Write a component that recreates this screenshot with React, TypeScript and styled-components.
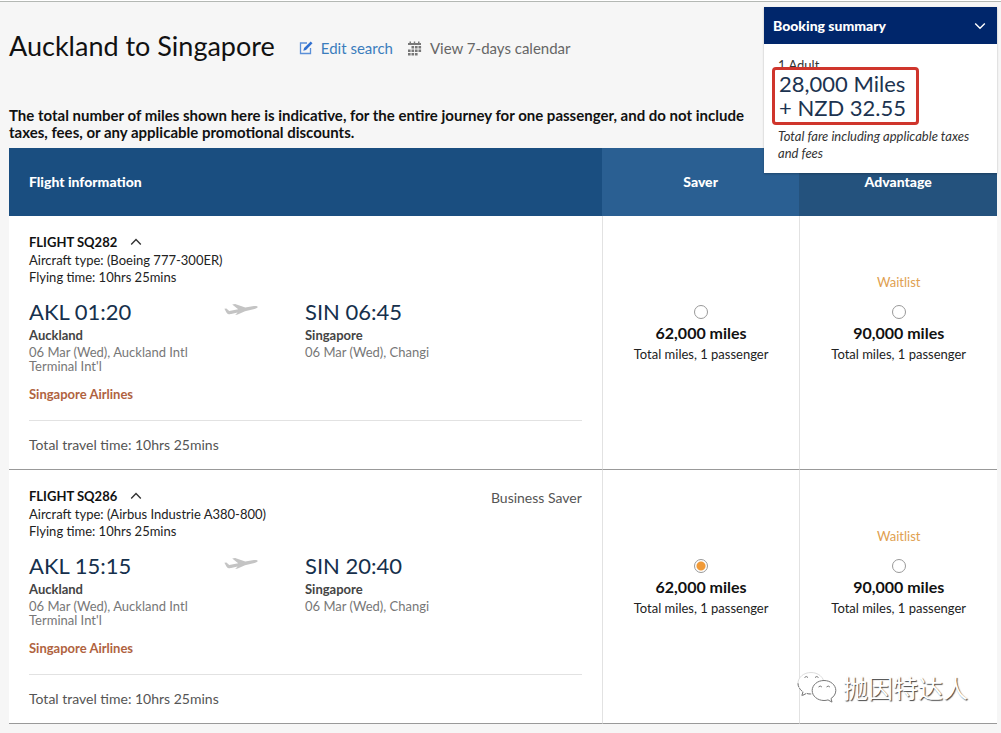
import React, { useState } from "react";
import styled, { createGlobalStyle } from "styled-components";

const sans = `Lato, "Liberation Sans", sans-serif`;
const display = `Lato, "Liberation Sans", sans-serif`;

const GlobalStyle = createGlobalStyle`
  *, *::before, *::after { box-sizing: border-box; }
  body {
    margin: 0;
    background: #f6f6f6;
    color: #222;
    font: 13px/18px ${sans};
  }
  h1, h2, p { margin: 0; }
  button { font: inherit; color: inherit; background: none; border: 0; padding: 0; cursor: pointer; }
`;

const Page = styled.main`
  position: relative;
  border-top: 1px solid #fff;
  padding: 0 4px 9px 9px;
  &::before {
    content: "";
    display: block;
    height: 1px;
    margin: 0 -4px 0 -9px;
    background: #b4b8b4;
  }
`;

const TitleBar = styled.header`
  display: flex;
  align-items: center;
  padding-top: 26px;
`;

const Title = styled.h1`
  font: 400 27px/36px ${display};
  color: #111;
  margin-right: 24px;
`;

const ToolLink = styled.a<{ $tone: string }>`
  display: flex;
  align-items: center;
  gap: 8px;
  margin: 4px 14px 0 0;
  font-size: 15px;
  color: ${(p) => p.$tone};
  text-decoration: none;
`;

const Notice = styled.p`
  max-width: 755px;
  margin: 43px 0 7px;
  font-size: 15px;
  line-height: 17px;
  font-weight: 700;
  color: #111;
`;

const Summary = styled.aside`
  position: absolute;
  top: 6px;
  right: 4px;
  width: 233px;
  background: #fff;
  box-shadow: 0 1px 2px rgba(0, 0, 0, 0.25);
`;

const SummaryHead = styled.button`
  display: flex;
  align-items: center;
  justify-content: space-between;
  width: 100%;
  height: 37px;
  padding: 0 11px 0 9px;
  background: #00266b;
  color: #fff;
  font-size: 14px;
  font-weight: 900;
`;

const SummaryBody = styled.div`
  padding: 12px 14px 11px;
  color: #333;
`;

const Price = styled.p`
  position: relative;
  width: 147px;
  margin: -7px 0 0 -6px;
  padding: 2px 4px;
  border: 3px solid #cf352c;
  border-radius: 4px;
  background: #fff;
  font: 400 22px/24px ${display};
  color: #1c3350;
`;

const FareNote = styled.p`
  margin-top: 3px;
  line-height: 17px;
  font-style: italic;
`;

const Results = styled.section`
  position: relative;
`;

const FlightTable = styled.table`
  width: 100%;
  table-layout: fixed;
  border-collapse: separate;
  border-spacing: 0;
  background: #fff;
`;

const HeadCell = styled.th<{ $bg: string; $width?: string }>`
  width: ${(p) => p.$width ?? "20%"};
  height: 68px;
  padding: 0 20px;
  background: ${(p) => p.$bg};
  color: #fff;
  font-size: 14px;
  font-weight: 900;
  text-align: ${(p) => (p.$width ? "left" : "center")};
`;

const InfoCell = styled.td`
  vertical-align: top;
  padding: 17px 20px 15px;
  border-bottom: 1px solid #999;
`;

const FareCell = styled.td`
  vertical-align: top;
  padding: 57px 4px 0;
  border-bottom: 1px solid #999;
  border-left: 1px solid #e2e2e2;
  text-align: center;
`;

const FlightHead = styled.div`
  display: flex;
  justify-content: space-between;
  align-items: flex-start;
  height: 19px;
`;

const FlightToggle = styled.button`
  display: flex;
  align-items: center;
  gap: 13px;
  font-weight: 700;
  color: #111;
`;

const Cabin = styled.span`
  padding-top: 2px;
  font-size: 14px;
  color: #555;
`;

const Detail = styled.p`
  line-height: 17px;
`;

const Route = styled.div`
  display: grid;
  grid-template-columns: 195px 81px 1fr;
  align-items: start;
  margin-top: 12px;
`;

const Time = styled.p`
  font: 400 22px/28px ${display};
  color: #16304c;
`;

const City = styled.p`
  font-weight: 700;
  color: #444;
`;

const Airport = styled.p`
  max-width: 170px;
  line-height: 14px;
  margin-top: 1px;
  color: #777;
`;

const Carrier = styled.p`
  margin-top: 12px;
  font-weight: 700;
  color: #b0633f;
`;

const Total = styled.p`
  margin-top: 17px;
  padding-top: 15px;
  border-top: 1px solid #e2e2e2;
  font-size: 14px;
  color: #555;
`;

const Status = styled.p`
  height: 18px;
  margin-bottom: 14px;
  color: #e0a050;
`;

const FareOption = styled.label`
  display: flex;
  flex-direction: column;
  align-items: center;
  cursor: pointer;
`;

const Radio = styled.input`
  appearance: none;
  width: 14px;
  height: 14px;
  margin: 0 0 5px;
  border: 1px solid #999;
  border-radius: 50%;
  background: #fff;
  &:checked {
    background: radial-gradient(circle, #f09a38 0 4px, #fff 5px);
  }
`;

const Miles = styled.strong`
  font-size: 16px;
  color: #111;
`;

const FareSub = styled.span`
  margin-top: 3px;
`;

const Watermark = styled.div`
  position: absolute;
  right: 29px;
  bottom: 20px;
  display: flex;
  align-items: center;
  gap: 6px;
  pointer-events: none;
  font: 400 25px/34px "Noto Sans CJK SC", sans-serif;
  color: #fff;
  text-shadow: 1px 1px 1px #444;
`;

const Chevron = ({ up, color }: { up?: boolean; color: string }) => (
  <svg width="12" height="8" viewBox="0 0 12 8" fill="none" stroke={color} strokeWidth="1.4" aria-hidden="true">
    <path d={up ? "M1.2 6.5 6 1.5l4.8 5" : "M1.2 1.5 6 6.3l4.8-4.8"} />
  </svg>
);

const EditIcon = () => (
  <svg width="14" height="14" viewBox="0 0 14 14" fill="none" aria-hidden="true">
    <path d="M8 2H1.500v10.500h10V7" stroke="#5a8fd8" strokeWidth="1.3" />
    <path d="M4.300 9.800l.8-2.800L11.700.5l1.800 1.700-6.500 6.700z" fill="#2f6fd0" />
  </svg>
);

const CalendarIcon = () => (
  <svg width="15" height="15" viewBox="0 0 15 15" fill="#777" aria-hidden="true">
    <path d="M1 2h1.500V.5H4V2h2.800V.5h1.400V2H11V.5h1.500V2H14v2H1z" />
    {[5, 8.5, 12].map((y, row) =>
      [1, 4.5, 8, 11.5].map((x, col) =>
        (row === 0 && col === 0) || (row === 2 && col === 3) ? null : (
          <rect key={`${x}-${y}`} x={x} y={y} width="2.6" height="2.5" />
        )
      )
    )}
  </svg>
);

const PlaneIcon = () => (
  <svg width="34" height="28" viewBox="0 0 34 28" fill="#c4c4c4" aria-hidden="true">
    <path d="M.4 10.800l2-.3 2.800 2.600 9-1.800-6-4.700 2.900-.5 10.200 3.400 8.600-1.400c2-.3 3.700.1 3.800.9.1.8-1.200 1.500-3.200 2L21 13.200l-7.300 3.400-2.500.4 2.400-2.400-6.400 1.500c-2 .4-3.700-.1-4.600-1.400z" />
  </svg>
);

const ChatIcon = () => (
  <svg width="41" height="34" viewBox="0 0 41 34" fill="#fff" stroke="#777" strokeWidth="1" aria-hidden="true">
    <path
      d="M15 2.500C7.800 2.500 2 7.300 2 13.300c0 3.500 2 6.500 5 8.500l-1.200 4 4.600-2.400c1.500.4 3 .6 4.600.6 7.200 0 13-4.700 13-10.700S22.200 2.500 15 2.500z"
      stroke="#ddd"
    />
    <path d="M2 13.300c0 3.500 2 6.500 5 8.500l-1.200 4 4.600-2.400c1.500.4 3 .6 4.600.6" fill="none" strokeDasharray="4 1" />
    <path d="M28 10.500c-6.600 0-11.800 4.500-11.800 10s5.200 10 11.800 10c1.400 0 2.800-.2 4-.6l4 2.200-1-3.600c2.900-1.800 4.800-4.700 4.800-8 0-5.500-5.200-10-11.800-10z" />
    <path d="M8.500 7.500q1.800-2 3.500 0M19 7.500q1.800-2 3.500 0M22.500 17q1.700-2 3.400 0M30.500 17q1.700-2 3.400 0" fill="none" />
  </svg>
);

const flights = [
  { id: "SQ282", aircraft: "Boeing 777-300ER", depart: "01:20", arrive: "06:45", cabin: "" },
  { id: "SQ286", aircraft: "Airbus Industrie A380-800", depart: "15:15", arrive: "20:40", cabin: "Business Saver" },
];

const fares = [
  { name: "Saver", miles: "62,000", status: "" },
  { name: "Advantage", miles: "90,000", status: "Waitlist" },
];

export default function App() {
  const [selected, setSelected] = useState("SQ286-Saver");

  return (
    <>
      <GlobalStyle />
      <Page>
        <TitleBar>
          <Title>Auckland to Singapore</Title>
          <ToolLink href="#edit" $tone="#3b7dbd">
            <EditIcon />
            Edit search
          </ToolLink>
          <ToolLink href="#calendar" $tone="#666">
            <CalendarIcon />
            View 7-days calendar
          </ToolLink>
        </TitleBar>
        <Notice>
          The total number of miles shown here is indicative, for the entire journey for one passenger, and do not
          include taxes, fees, or any applicable promotional discounts.
        </Notice>

        <Results>
          <FlightTable>
            <thead>
              <tr>
                <HeadCell scope="col" $bg="#1a4e80" $width="60%">Flight information</HeadCell>
                <HeadCell scope="col" $bg="#2a5f92">Saver</HeadCell>
                <HeadCell scope="col" $bg="#24527d">Advantage</HeadCell>
              </tr>
            </thead>
            <tbody>
              {flights.map((f) => (
                <tr key={f.id}>
                  <InfoCell>
                    <FlightHead>
                      <FlightToggle type="button" aria-expanded="true">
                        FLIGHT {f.id}
                        <Chevron up color="#333" />
                      </FlightToggle>
                      {f.cabin && <Cabin>{f.cabin}</Cabin>}
                    </FlightHead>
                    <Detail>Aircraft type: ({f.aircraft})</Detail>
                    <Detail>Flying time: 10hrs 25mins</Detail>
                    <Route>
                      <div>
                        <Time>AKL {f.depart}</Time>
                        <City>Auckland</City>
                        <Airport>06 Mar (Wed), Auckland Intl Terminal Int'l</Airport>
                      </div>
                      <PlaneIcon />
                      <div>
                        <Time>SIN {f.arrive}</Time>
                        <City>Singapore</City>
                        <Airport>06 Mar (Wed), Changi</Airport>
                      </div>
                    </Route>
                    <Carrier>Singapore Airlines</Carrier>
                    <Total>Total travel time: 10hrs 25mins</Total>
                  </InfoCell>
                  {fares.map((fare) => {
                    const key = `${f.id}-${fare.name}`;
                    return (
                      <FareCell key={key}>
                        <Status>{fare.status}</Status>
                        <FareOption>
                          <Radio
                            type="radio"
                            name="fare"
                            value={key}
                            checked={selected === key}
                            onChange={() => setSelected(key)}
                          />
                          <Miles>{fare.miles} miles</Miles>
                          <FareSub>Total miles, 1 passenger</FareSub>
                        </FareOption>
                      </FareCell>
                    );
                  })}
                </tr>
              ))}
            </tbody>
          </FlightTable>
          <Watermark>
            <ChatIcon />
            抛因特达人
          </Watermark>
        </Results>

        <Summary>
          <SummaryHead type="button" aria-expanded="true">
            Booking summary
            <Chevron color="#fff" />
          </SummaryHead>
          <SummaryBody>
            <p>1 Adult</p>
            <Price>
              28,000 Miles
              <br />+ NZD 32.55
            </Price>
            <FareNote>Total fare including applicable taxes and fees</FareNote>
          </SummaryBody>
        </Summary>
      </Page>
    </>
  );
}
